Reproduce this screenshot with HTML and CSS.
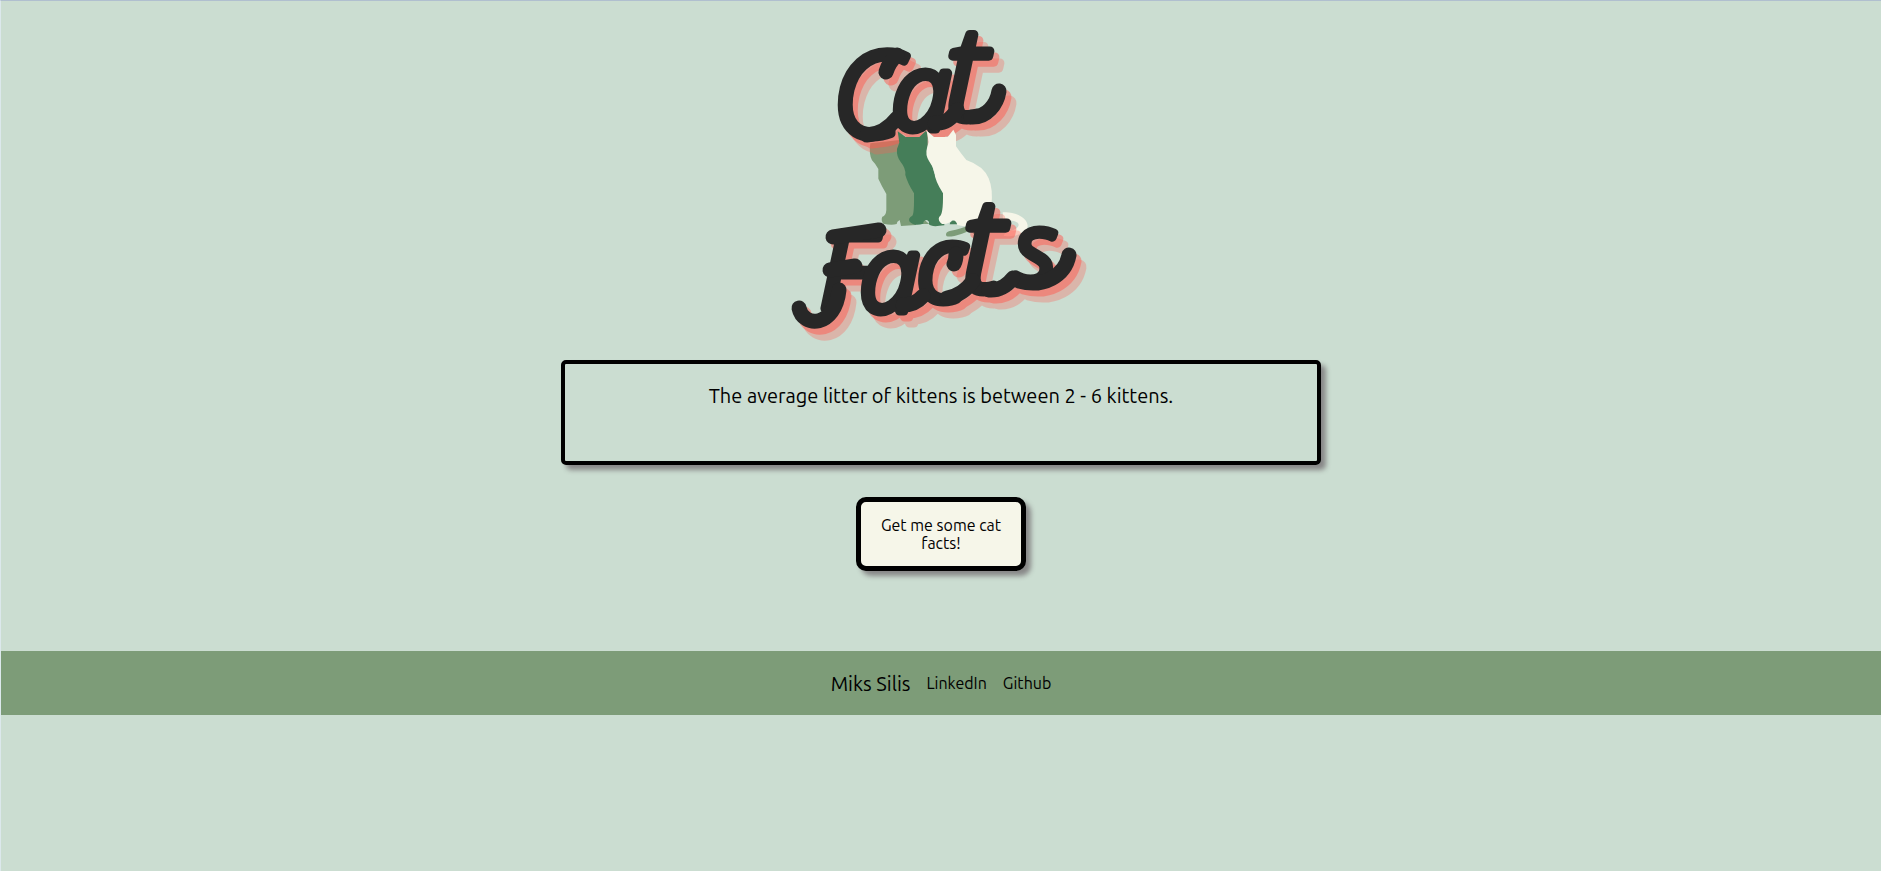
FILE: index.html
```html
<!DOCTYPE html>
<html lang="en">
<head>
<meta charset="utf-8">
<title>Cat Facts</title>
<link rel="stylesheet" href="styles.css">
</head>
<body>
<main class="main">
  <h1 class="brand">
    <svg class="logo" viewBox="780 10 320 340" role="img" aria-label="Cat Facts">
      <defs>
        <g id="word-cat">
          <text class="word" x="832 891 945" y="136 129 119"><tspan class="cap">C</tspan>a<tspan class="tall">t</tspan></text>
          <path class="swash" d="M970 117C986 118 996 104 998 91"/>
          <path class="swash" d="M866 135C880 134 889 127 896 118"/>
          <path class="swash" d="M934 123C944 124 950 119 956 110"/>
          <path class="swash" d="M896 55Q888 62 885 72"/>
        </g>
        <g id="word-facts">
          <text class="word" x="819 859 916 962 1014" y="309 311 301 291 282">Fac<tspan class="tall">t</tspan><tspan class="last">s</tspan></text>
          <path class="swash" d="M838 290C834 328 802 328 798 308"/>
          <path class="swash" d="M832 237L878 230"/>
          <path class="swash" d="M829 270L854 266"/>
          <path class="swash" d="M1018 281C1042 288 1064 276 1068 255"/>
          <path class="swash" d="M902 305Q914 305 922 296M946 298Q962 295 972 281M988 290Q1002 291 1012 278"/>
          <path class="swash" d="M955 254Q955 260 953 264"/>
        </g>
      </defs>
      <g transform="translate(850 120) scale(.333333)">
        <path class="sage" d="M58 70L145 60L192 170L195 315L150 318L146 300Q137 304 137 312Q122 317 97 311Q89 300 94 290Q105 287 106 270V222Q92 198 82 176V147Q74 132 63 121Q53 102 58 70ZM209 290L235 312H215Z"/>
        <path class="sage" d="M285 344C285 330 310 333 330 325Q348 316 361 317Q359 332 333 341Q285 357 285 344Z"/>
      </g>
      <use href="#word-cat" class="shade-far" x="10" y="12"/>
      <use href="#word-cat" class="shade-near" x="5" y="6"/>
      <use href="#word-cat" class="ink"/>
      <g transform="translate(850 120) scale(.333333)">
        <path class="green" d="M140 34L164 51H205L225 32L230 42V90L250 160Q274 193 280 220V316Q240 322 234 313Q236 302 226 300Q216 302 217 311Q190 320 176 305Q170 294 184 287Q190 281 189 220Q170 190 163 165Q165 145 149 126Q136 109 138 87L145 68ZM298 307Q306 298 316 300L319 313H296ZM366 341L375 331L382 345Z"/>
        <path class="cream" d="M227 32L249 51H290L307 29L315 45V79Q327 97 346 120Q398 138 413 175Q427 208 421 260L408 313Q350 323 319 315Q316 300 303 301Q292 314 273 312Q259 301 265 290Q277 286 276 220Q252 183 250 157Q246 139 234 123Q222 104 228 84L233 66Z"/>
        <path class="cream" d="M455 277C490 273 530 293 530 318C528 336 500 351 458 348L464 335C485 333 503 325 503 314C501 303 476 298 456 302Z"/>
      </g>
      <use href="#word-facts" class="shade-far" x="10" y="12"/>
      <use href="#word-facts" class="shade-near" x="5" y="6"/>
      <use href="#word-facts" class="ink"/>
    </svg>
  </h1>
  <p class="fact">The average litter of kittens is between 2 - 6 kittens.</p>
  <button class="more" type="button">Get me some cat facts!</button>
</main>
<footer class="footer">
  <span class="author">Miks Silis</span>
  <a class="link" href="#linkedin">LinkedIn</a>
  <a class="link" href="#github">Github</a>
</footer>
</body>
</html>
```
FILE: styles.css
```css
* { box-sizing: border-box; }
body {
  margin: 0;
  min-height: 100vh;
  background: #cbddd1;
  border-top: 1px solid #b0bfcf;
  border-left: 1px solid #dce8ec;
  color: #000;
  font-family: Ubuntu, "Noto Sans", sans-serif;
  font-size: 16px;
}
.main {
  display: flex;
  flex-direction: column;
  align-items: center;
  padding: 9px 16px 80px;
}
.brand { margin: 0 0 10px; }
.logo { display: block; width: 320px; max-width: 100%; height: auto; }
.word {
  font-family: "Open Sans", "Noto Sans", sans-serif;
  font-size: 106px;
  font-style: italic;
  font-weight: 300;
  stroke-width: 9px;
  stroke-linejoin: round;
}
.cap { font-size: 116px; }
.tall { font-size: 128px; }
.last { font-size: 96px; }
.swash { fill: none; stroke-width: 15px; stroke-linecap: round; }
.ink { fill: #272727; stroke: #272727; }
.shade-near { fill: #ff5c52; stroke: #ff5c52; opacity: .5; }
.shade-far { fill: #ff5c52; stroke: #ff5c52; opacity: .3; }
.sage { fill: #7d9c78; }
.green { fill: #457e59; }
.cream { fill: #f6f6e9; }
.fact {
  width: 100%;
  max-width: 760px;
  min-height: 105px;
  margin: 0 0 32px;
  padding: 19px 16px;
  border: 4px solid #000;
  border-radius: 5px;
  box-shadow: 5px 5px 5px #888;
  font-size: 20px;
  line-height: 26px;
  text-align: center;
}
.more {
  width: 170px;
  padding: 14px 12px;
  border: 5px solid #000;
  border-radius: 10px;
  background: #f6f6e9;
  box-shadow: 5px 5px 5px #888;
  color: #000;
  font-family: inherit;
  font-size: 16px;
  line-height: 18px;
}
.footer {
  display: flex;
  justify-content: center;
  align-items: center;
  gap: 16px;
  min-height: 64px;
  background: #7d9c78;
}
.author { font-size: 20px; }
.link { color: #000; font-size: 16px; text-decoration: none; }
```
